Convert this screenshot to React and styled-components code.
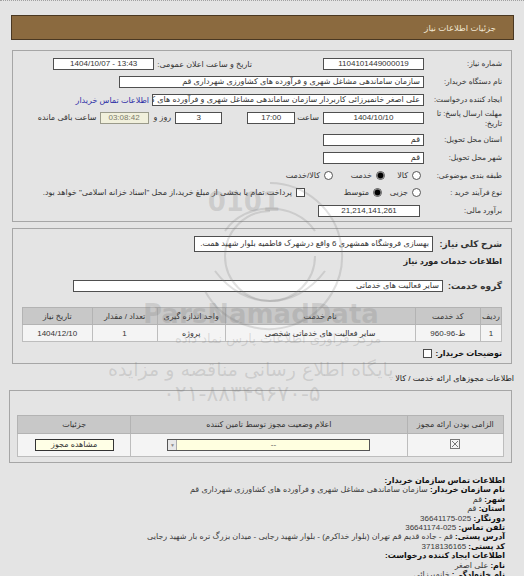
import styled, { createGlobalStyle } from "styled-components";

const GlobalStyle = createGlobalStyle`
  html, body {
    margin: 0;
    padding: 0;
    background: #e4e4e4;
  }
  body {
    font-family: "Liberation Sans", "DejaVu Sans", sans-serif;
    font-size: 8px;
    color: #222;
  }
`;

const Page = styled.div`
  position: relative;
  direction: rtl;
  height: 576px;
  box-sizing: border-box;
  overflow: hidden;
  border-top: 1px dotted #a0a0a0;
  padding: 14px 10px 0 11px;
`;

const TitleBar = styled.div`
  height: 25px;
  box-sizing: border-box;
  display: flex;
  align-items: center;
  padding-right: 17px;
  background: #8b6a3f;
  border: 1px solid #4a3822;
  color: #f1e7d3;
  font-size: 8.5px;
`;

const Panel = styled.div`
  margin: ${(p) => p.$top}px 2px 0 ${(p) => p.$left ?? 1}px;
  border: 1px solid #a6a6a6;
  padding: ${(p) => p.$pad};
`;

const Row = styled.div`
  display: flex;
  align-items: ${(p) => (p.$top ? "flex-start" : "center")};
  height: ${(p) => p.$h || 18}px;
`;

const Label = styled.div`
  width: 78px;
  flex: none;
  font-size: 7.5px;
  line-height: 10px;
  color: #333;
`;

const Text = styled.span`
  flex: none;
  margin-right: ${(p) => p.$mr || 0}px;
  margin-top: ${(p) => p.$mt || 0}px;
  color: ${(p) => p.$color || "#333"};
  white-space: nowrap;
`;

const Box = styled.div`
  flex: none;
  box-sizing: border-box;
  width: ${(p) => p.$w}px;
  height: ${(p) => p.$h || 12}px;
  margin-top: ${(p) => p.$mt || 0}px;
  margin-right: ${(p) => p.$mr || 0}px;
  padding: 0 3px;
  border: 1px solid ${(p) => (p.$dim ? "#9a9a8a" : "#4f4f4f")};
  background: ${(p) => (p.$dim ? "#f1f0dc" : "#fff")};
  color: ${(p) => (p.$dim ? "#7a7a6a" : "#333")};
  line-height: ${(p) => (p.$h || 12) - 2}px;
  text-align: ${(p) => (p.$ltr ? "center" : "right")};
  direction: ${(p) => (p.$ltr ? "ltr" : "rtl")};
  white-space: nowrap;
  overflow: hidden;
`;

const Link = styled.span`
  margin-right: 3px;
  color: #2d2da6;
  white-space: nowrap;
`;

const Choice = styled.span`
  flex: none;
  display: inline-flex;
  align-items: center;
  gap: 4px;
  width: ${(p) => (p.$w ? `${p.$w}px` : "auto")};
  margin-right: ${(p) => p.$mr || 0}px;
  font-weight: ${(p) => (p.$bold ? "bold" : "normal")};
  color: ${(p) => (p.$bold ? "#111" : "#333")};
  white-space: nowrap;
`;

const Radio = styled.span`
  flex: none;
  width: 9px;
  height: 9px;
  box-sizing: border-box;
  border-radius: 50%;
  border: 1px solid #555;
  background: ${(p) =>
    p.$on ? "radial-gradient(circle, #000 0 2.6px, #5d5d5d 3px, #fff 3.7px)" : "#fff"};
`;

const Check = styled.span`
  flex: none;
  width: 9px;
  height: 9px;
  box-sizing: border-box;
  border: 1px solid #4a4a4a;
  background: #fff;
`;

const Bold = styled.b`
  color: #111;
`;

const Heading = styled.div`
  height: 12px;
  line-height: 12px;
  margin-top: ${(p) => p.$mt || 0}px;
  font-weight: ${(p) => (p.$bold ? "bold" : "normal")};
  color: #222;
`;

const GroupLabel = styled.div`
  width: ${(p) => p.$w || 59}px;
  flex: none;
  font-size: 9px;
  font-weight: bold;
  color: #333;
`;

const Grid = styled.table`
  width: 100%;
  border-collapse: collapse;
  margin-top: ${(p) => p.$mt || 0}px;
`;

const HeadCell = styled.th`
  width: ${(p) => p.$w}px;
  height: ${(p) => p.$h || 16}px;
  padding: 0;
  background: #c8c8c8;
  border: 1px solid #b3b3b3;
  font-weight: normal;
  color: #333;
`;

const Cell = styled.td`
  height: ${(p) => p.$h || 16}px;
  padding: 0;
  background: #f4f4f4;
  border: 1px solid #bdbdbd;
  text-align: center;
  color: #333;
`;

const Select = styled.div`
  display: flex;
  width: 203px;
  height: 12px;
  margin: 0 auto;
  box-sizing: border-box;
  border: 1px solid #555;
  background: #ffffe0;
  direction: ltr;
`;

const SelectArrow = styled.span`
  width: 9px;
  height: 10px;
  box-sizing: border-box;
  border-right: 1px solid #aaa;
  background: #e8e8e8;
  display: flex;
  align-items: center;
  justify-content: center;
  font-size: 5px;
  color: #888;
`;

const SelectValue = styled.span`
  flex: 1;
  line-height: 10px;
  text-align: center;
  color: #555;
`;

const ViewButton = styled.div`
  width: 79px;
  height: 12px;
  margin: 0 auto;
  box-sizing: border-box;
  border: 1px solid #333;
  background: #ffffe6;
  line-height: 10px;
  text-align: center;
  color: #333;
`;

const Contact = styled.div`
  margin-top: 13px;
  padding-right: 9px;
  line-height: 9.4px;
  color: #3a3a3a;
`;

const Line = styled.div`
  white-space: nowrap;
`;

const Watermark = styled.div`
  position: absolute;
  inset: 0;
  pointer-events: none;
  color: rgba(120, 120, 120, 0.22);
  font-family: "DejaVu Sans", sans-serif;
`;

const MarkText = styled.div`
  position: absolute;
  top: ${(p) => p.$y}px;
  left: ${(p) => p.$x}px;
  font-size: ${(p) => p.$size}px;
  font-weight: ${(p) => (p.$bold ? "bold" : "normal")};
  white-space: nowrap;
  direction: ${(p) => (p.$ltr ? "ltr" : "rtl")};
`;

function BoxCheck() {
  return (
    <svg width="10" height="10" viewBox="0 0 10 10">
      <rect x="0.5" y="0.5" width="9" height="9" fill="#f4f4f4" stroke="#777" />
      <path d="M2 2 L8 8 M8 2 L2 8" stroke="#777" strokeWidth="1" />
    </svg>
  );
}

function Emblem() {
  return (
    <svg
      width="170"
      height="170"
      viewBox="0 0 170 170"
      style={{ position: "absolute", left: 185, top: 170 }}
    >
      <g fill="none" stroke="rgba(120,120,120,0.22)" strokeWidth="2">
        <path d="M85 12 A73 73 0 1 1 20 120" />
        <path d="M85 40 A45 45 0 1 0 130 85" />
        <path d="M40 60 C60 30 110 30 130 60" />
        <path d="M30 100 C60 140 110 140 140 100" />
      </g>
      <text
        x="95"
        y="40"
        fontSize="26"
        fontWeight="bold"
        fill="rgba(120,120,120,0.22)"
        fontFamily="DejaVu Sans, sans-serif"
      >
        0101
      </text>
    </svg>
  );
}

export default function App() {
  return (
    <>
      <GlobalStyle />
      <Page>
        <TitleBar>جزئیات اطلاعات نیاز</TitleBar>

        <Panel $top={10} $pad="4px 9px 0 8px">
          <Row>
            <Label>شماره نیاز:</Label>
            <Box $w={101} $ltr>1104101449000019</Box>
            <Text $mr={71}>تاریخ و ساعت اعلان عمومی:</Text>
            <Box $w={101} $mr={3} $ltr>
              1404/10/07 - 13:43
            </Box>
          </Row>
          <Row>
            <Label>نام دستگاه خریدار:</Label>
            <Box $w={305}>سازمان ساماندهی مشاغل شهری و فرآورده های کشاورزی شهرداری قم</Box>
          </Row>
          <Row>
            <Label>ایجاد کننده درخواست:</Label>
            <Box $w={272}>
              علی اصغر خانمیرزائی کاربردار سازمان ساماندهی مشاغل شهری و فرآورده های کشاورزی شهرداری قم
            </Box>
            <Link>اطلاعات تماس خریدار</Link>
          </Row>
          <Row $h={22} $top>
            <Label>مهلت ارسال پاسخ: تا تاریخ:</Label>
            <Box $w={101} $mt={3} $ltr>
              1404/10/10
            </Box>
            <Text $mr={4} $mt={4}>
              ساعت
            </Text>
            <Box $w={48} $mt={3} $mr={2} $ltr>
              17:00
            </Box>
            <Box $w={47} $mt={3} $mr={25} $ltr>
              3
            </Box>
            <Text $mr={4} $mt={4}>
              روز و
            </Text>
            <Box $w={49} $mt={3} $mr={5} $ltr $dim>
              03:08:42
            </Box>
            <Text $mr={3} $mt={4}>
              ساعت باقی مانده
            </Text>
          </Row>
          <Row>
            <Label>استان محل تحویل:</Label>
            <Box $w={101}>قم</Box>
          </Row>
          <Row>
            <Label>شهر محل تحویل:</Label>
            <Box $w={101}>قم</Box>
          </Row>
          <Row $h={17}>
            <Label>طبقه بندی موضوعی:</Label>
            <Choice $w={36} $mr={3}>
              <Radio />
              کالا
            </Choice>
            <Choice $w={52}>
              <Radio $on />
              خدمت
            </Choice>
            <Choice>
              <Radio />
              کالا/خدمت
            </Choice>
          </Row>
          <Row $h={17}>
            <Label>نوع فرآیند خرید :</Label>
            <Choice $w={39} $mr={3}>
              <Radio />
              جزیی
            </Choice>
            <Choice $w={77}>
              <Radio $on />
              متوسط
            </Choice>
            <Choice>
              <Check />
              پرداخت تمام یا بخشی از مبلغ خرید،از محل "اسناد خزانه اسلامی" خواهد بود.
            </Choice>
          </Row>
          <Row $h={20}>
            <Label>برآورد مالی:</Label>
            <Box $w={102} $mr={4} $ltr>
              21,214,141,261
            </Box>
          </Row>
        </Panel>

        <Panel $top={6} $pad="7px 9px 3px 9px">
          <Row $h={16}>
            <GroupLabel $w={69}>شرح کلی نیاز:</GroupLabel>
            <Box $w={239} $h={16}>
              بهسازی فروشگاه همشهری 6 واقع درشهرک فاطمیه بلوار شهید همت.
            </Box>
          </Row>
          <Heading $bold $mt={4}>
            اطلاعات خدمات مورد نیاز
          </Heading>
          <Row $h={19} style={{ marginTop: 8 }}>
            <GroupLabel>گروه خدمت:</GroupLabel>
            <Box $w={370} $h={12}>
              سایر فعالیت های خدماتی
            </Box>
          </Row>
          <Grid $mt={12}>
            <thead>
              <tr>
                <HeadCell $w={20}>ردیف</HeadCell>
                <HeadCell $w={65}>کد خدمت</HeadCell>
                <HeadCell $w={192}>نام خدمت</HeadCell>
                <HeadCell $w={68}>واحد اندازه گیری</HeadCell>
                <HeadCell $w={65}>تعداد / مقدار</HeadCell>
                <HeadCell $w={69}>تاریخ نیاز</HeadCell>
              </tr>
            </thead>
            <tbody>
              <tr>
                <Cell>1</Cell>
                <Cell>ط-96-960</Cell>
                <Cell>سایر فعالیت های خدماتی شخصی</Cell>
                <Cell>پروژه</Cell>
                <Cell>1</Cell>
                <Cell>1404/12/10</Cell>
              </tr>
            </tbody>
          </Grid>
          <Row $h={14} style={{ marginTop: 4 }}>
            <Choice $bold>
              توضیحات خریدار:
              <Check />
            </Choice>
          </Row>
        </Panel>

        <Heading $mt={9}>اطلاعات مجوزهای ارائه خدمت / کالا</Heading>

        <Panel $top={5} $left={-2} $pad="24px 7px 5px 7px">
          <Grid>
            <thead>
              <tr>
                <HeadCell $w={97} $h={17}>
                  الزامی بودن ارائه مجوز
                </HeadCell>
                <HeadCell $w={277} $h={17}>
                  اعلام وضعیت مجوز توسط تامین کننده
                </HeadCell>
                <HeadCell $w={113} $h={17}>
                  جزئیات
                </HeadCell>
              </tr>
            </thead>
            <tbody>
              <tr>
                <Cell $h={22}>
                  <BoxCheck />
                </Cell>
                <Cell $h={22}>
                  <Select>
                    <SelectArrow>▼</SelectArrow>
                    <SelectValue>--</SelectValue>
                  </Select>
                </Cell>
                <Cell $h={22}>
                  <ViewButton>مشاهده مجوز</ViewButton>
                </Cell>
              </tr>
            </tbody>
          </Grid>
        </Panel>

        <Contact>
          <Line>
            <Bold>اطلاعات تماس سازمان خریدار:</Bold>
          </Line>
          <Line>
            <Bold>نام سازمان خریدار:</Bold> سازمان ساماندهی مشاغل شهری و فرآورده های کشاورزی شهرداری قم
          </Line>
          <Line>
            <Bold>شهر:</Bold> قم
          </Line>
          <Line>
            <Bold>استان:</Bold> قم
          </Line>
          <Line>
            <Bold>دورنگار:</Bold> 025-36641175
          </Line>
          <Line>
            <Bold>تلفن تماس:</Bold> 025-36641174
          </Line>
          <Line>
            <Bold>آدرس پستی:</Bold> قم - جاده قدیم قم تهران (بلوار خداکرم) - بلوار شهید رجایی - میدان بزرگ تره بار شهید رجایی
          </Line>
          <Line>
            <Bold>کد پستی:</Bold> 3718136165
          </Line>
          <Line>
            <Bold>اطلاعات ایجاد کننده درخواست:</Bold>
          </Line>
          <Line>
            <Bold>نام:</Bold> علی اصغر
          </Line>
          <Line>
            <Bold>نام خانوادگی:</Bold> خانمیرزائی
          </Line>
        </Contact>

        <Watermark>
          <Emblem />
          <MarkText $x={143} $y={298} $size={26} $bold $ltr>
            ParsNamadData
          </MarkText>
          <MarkText $x={175} $y={330} $size={13}>
            مرکز فراوری اطلاعات پارس نماد داده
          </MarkText>
          <MarkText $x={108} $y={357} $size={19}>
            پایگاه اطلاع رسانی مناقصه و مزایده
          </MarkText>
          <MarkText $x={163} $y={380} $size={22}>
            ۰۲۱-۸۸۳۴۹۶۷۰-۵
          </MarkText>
        </Watermark>
      </Page>
    </>
  );
}
